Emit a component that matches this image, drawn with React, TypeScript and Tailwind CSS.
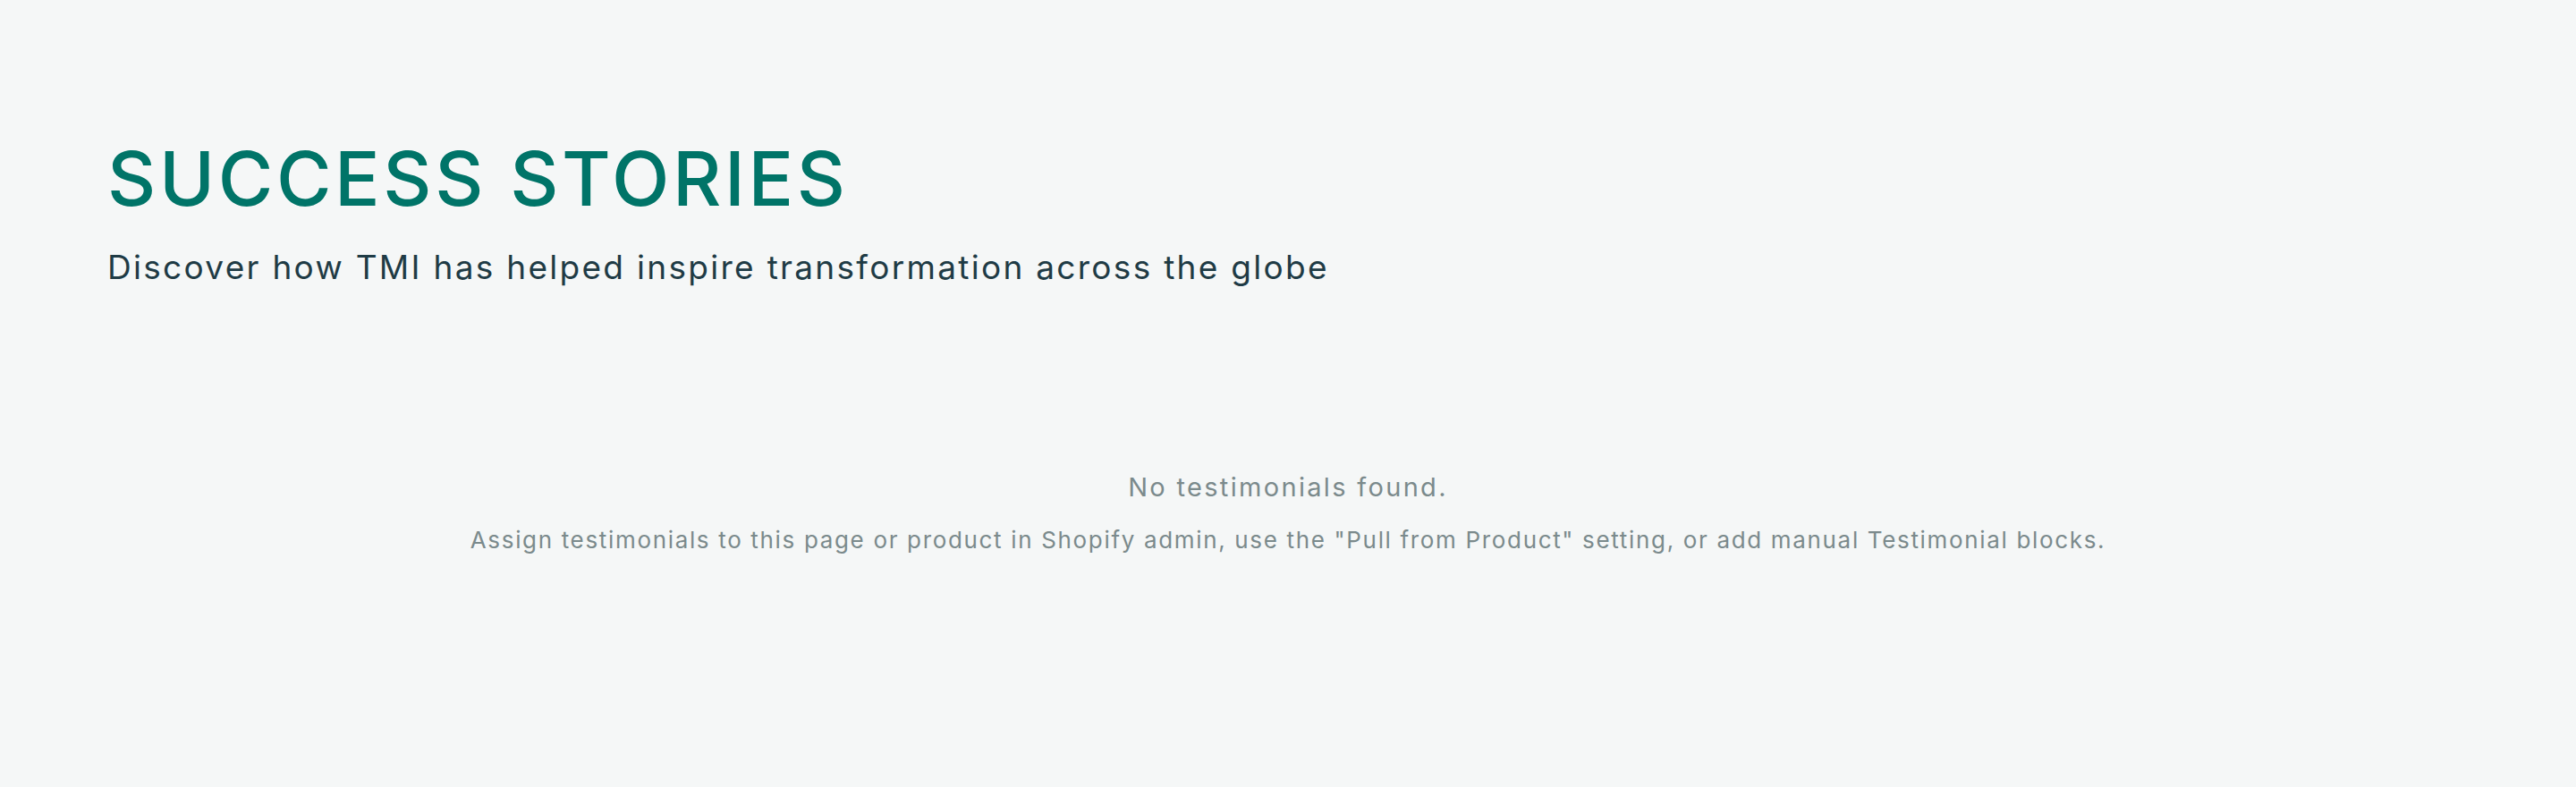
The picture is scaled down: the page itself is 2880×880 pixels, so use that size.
export default function App() {
  return (
    <div className="min-h-[880px] bg-[#f5f7f7] font-['Inter',sans-serif]">
      <section className="px-[120px] pt-[158px]">
        <h2 className="text-[84px] leading-none font-medium tracking-[0.043em] text-[#007468]">SUCCESS STORIES</h2>
        <p className="mt-[35px] text-[37px] leading-[1.2] tracking-[0.062em] text-[#1f3b45]">
          Discover how TMI has helped inspire transformation across the globe
        </p>
      </section>
      <div className="mt-[207px] flex flex-col items-center text-center text-[#7b8a8c]">
        <p className="text-[29px] leading-[1.2] tracking-[0.08em]">No testimonials found.</p>
        <p className="mt-[25px] text-[26px] leading-[1.2] tracking-[0.064em]">
          Assign testimonials to this page or product in Shopify admin, use the "Pull from Product" setting, or add manual Testimonial blocks.
        </p>
      </div>
    </div>
  );
}
